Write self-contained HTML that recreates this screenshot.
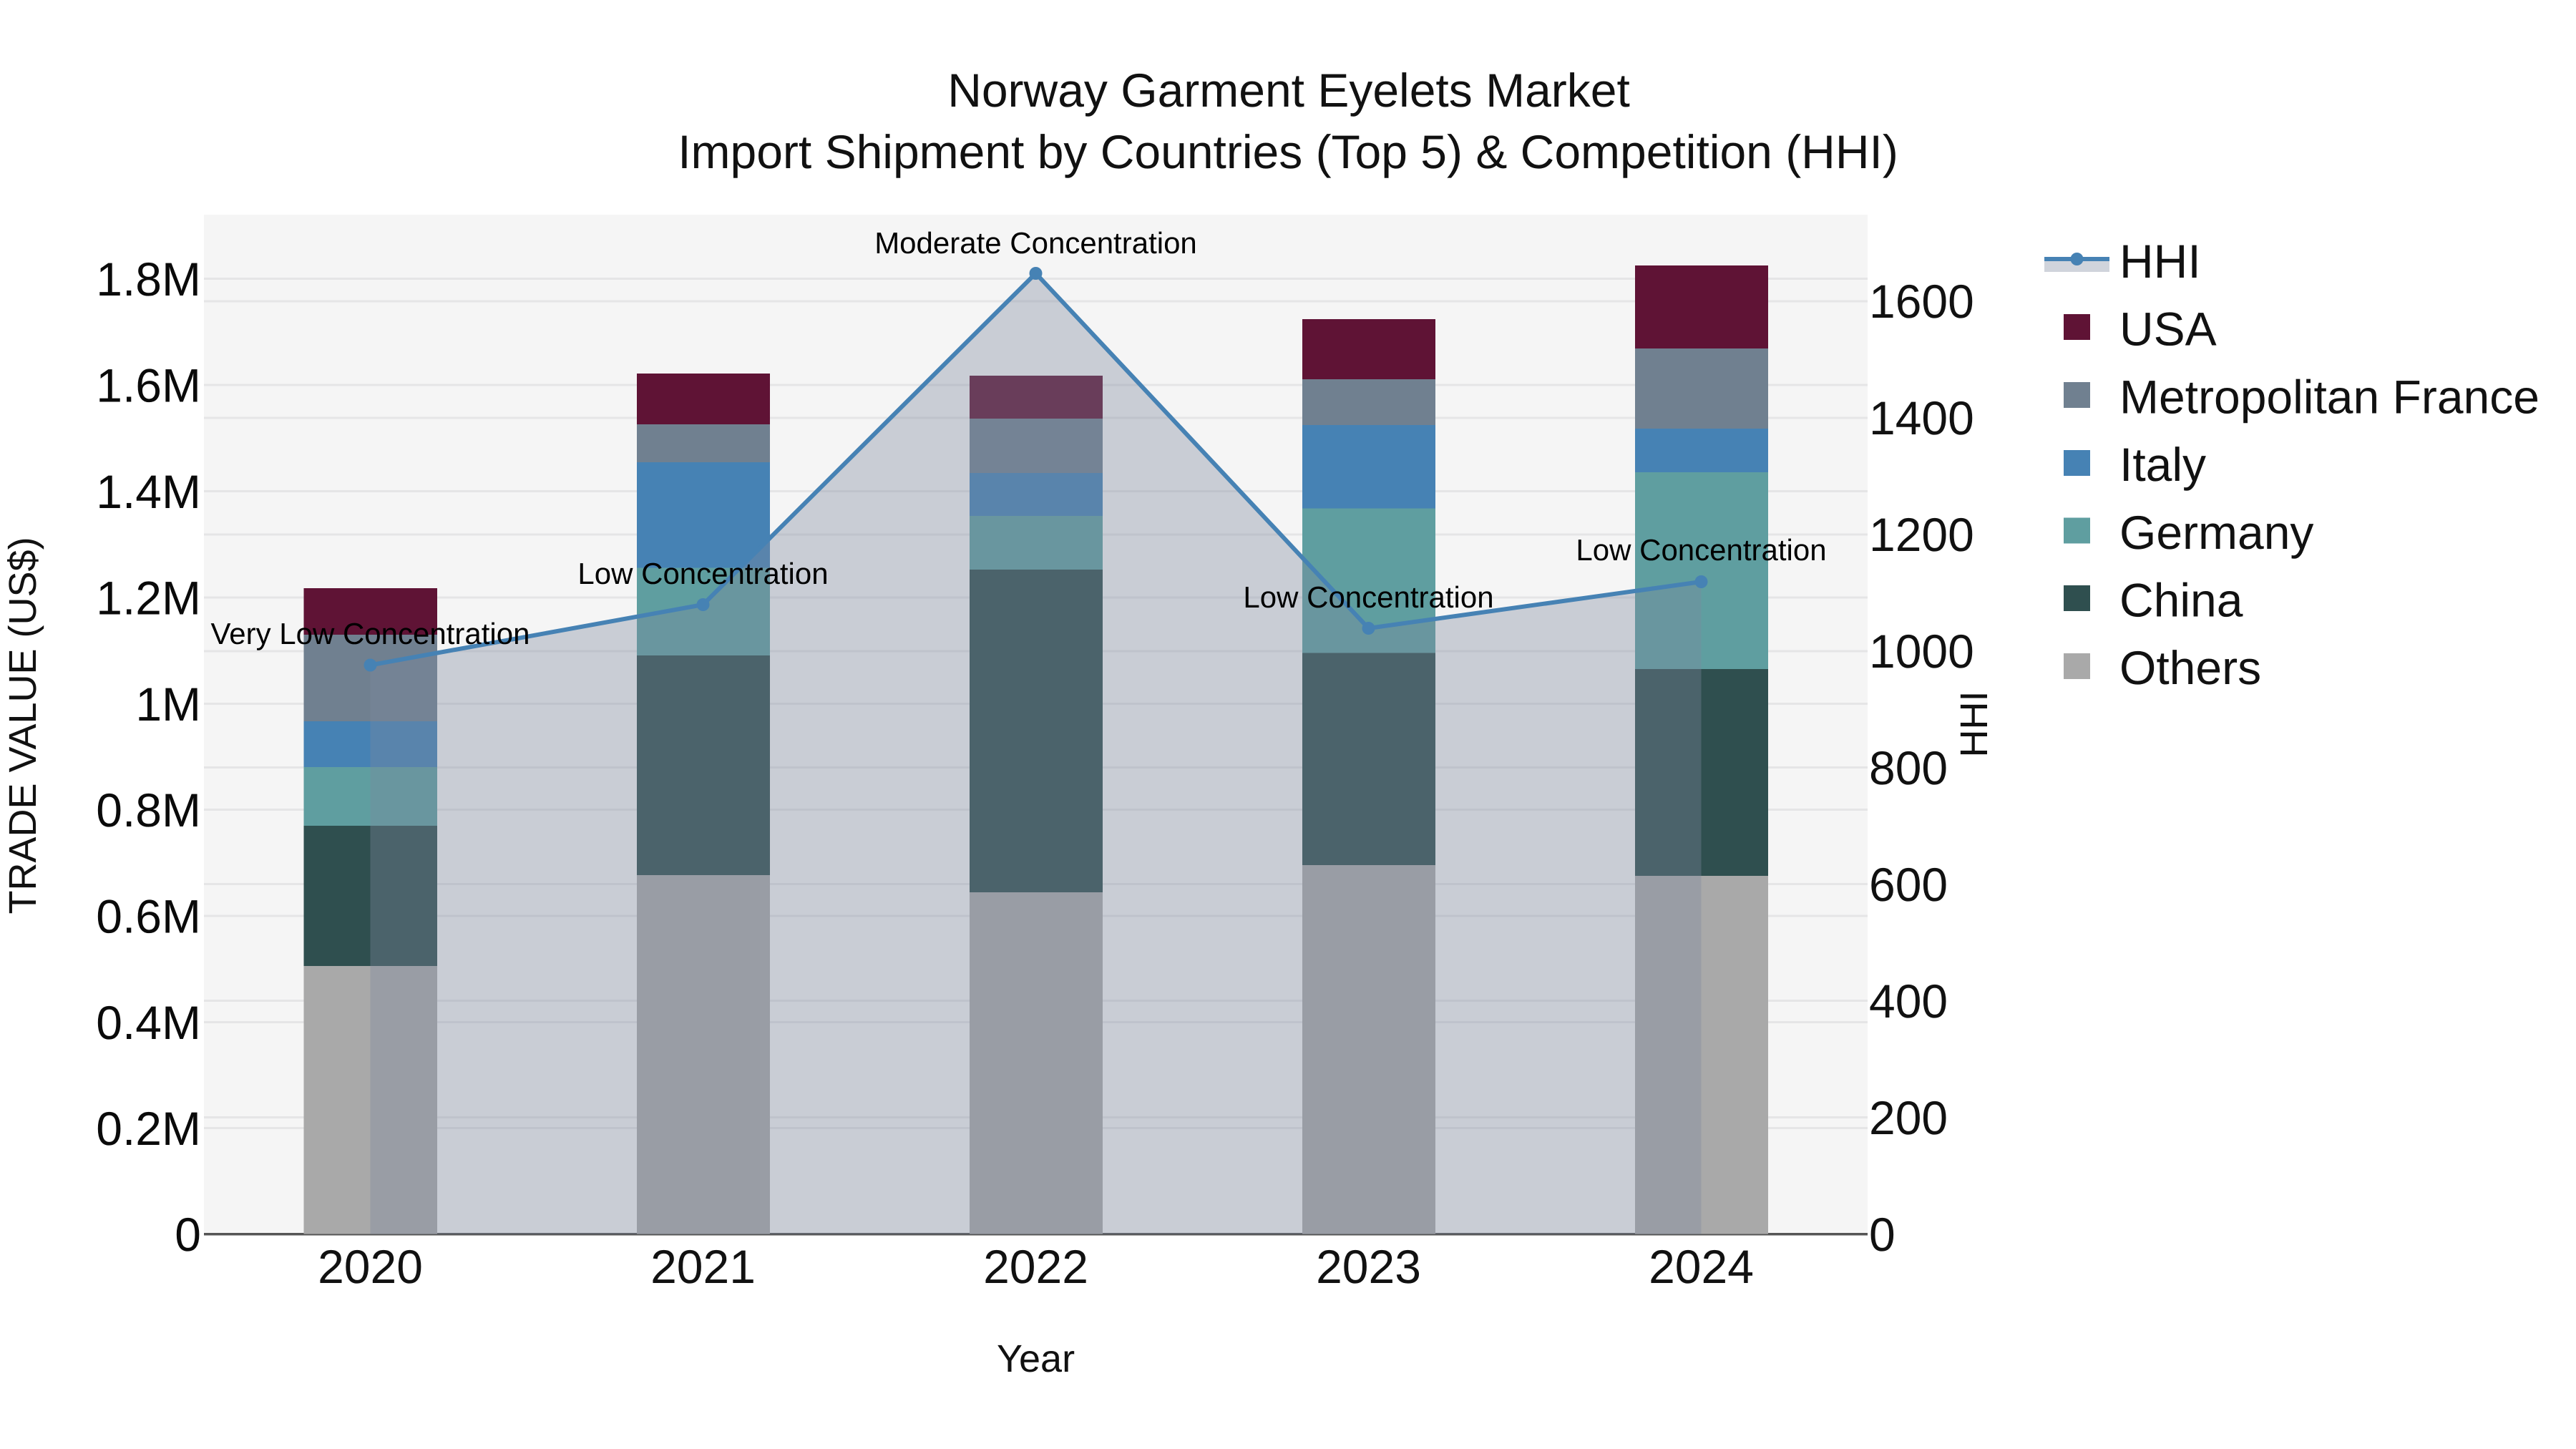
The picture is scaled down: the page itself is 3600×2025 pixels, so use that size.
<!DOCTYPE html>
<html>
<head>
<meta charset="utf-8">
<title>Norway Garment Eyelets Market</title>
<style>
html,body{margin:0;padding:0;background:#fff;width:3600px;height:2025px;overflow:hidden}
svg{display:block}
text{font-family:"Liberation Sans",Arial,sans-serif;text-rendering:geometricPrecision}
</style>
</head>
<body>
<svg xmlns="http://www.w3.org/2000/svg" width="3600" height="2025" viewBox="0 0 3600 2025">
<rect x="0" y="0" width="3600" height="2025" fill="#ffffff"/>
<rect x="285" y="300" width="2325" height="1425" fill="#f5f5f5"/>
<!-- gridlines -->
<g stroke="#e5e5e6" stroke-width="3" fill="none">
<path d="M285 389.5H2610M285 538H2610M285 686.5H2610M285 835H2610M285 983.5H2610M285 1131.5H2610M285 1280H2610M285 1428.5H2610M285 1576.5H2610"/>
<path d="M285 421H2610M285 584H2610M285 747H2610M285 910H2610M285 1072.5H2610M285 1235.5H2610M285 1398.5H2610M285 1561.5H2610"/>
</g>
<rect x="285" y="1723" width="2325" height="3.5" fill="#555555"/>
<!-- bars -->
<g shape-rendering="crispEdges">
<!-- 2020 -->
<rect x="424.5" y="822" width="186.5" height="65" fill="#5f1335"/>
<rect x="424.5" y="887" width="186.5" height="121" fill="#708090"/>
<rect x="424.5" y="1008" width="186.5" height="64" fill="#4682b4"/>
<rect x="424.5" y="1072" width="186.5" height="82" fill="#5f9ea0"/>
<rect x="424.5" y="1154" width="186.5" height="196" fill="#2f4f4f"/>
<rect x="424.5" y="1350" width="186.5" height="374.7" fill="#a9a9a9"/>
<!-- 2021 -->
<rect x="890" y="522" width="186" height="71" fill="#5f1335"/>
<rect x="890" y="593" width="186" height="53" fill="#708090"/>
<rect x="890" y="646" width="186" height="147.5" fill="#4682b4"/>
<rect x="890" y="793.5" width="186" height="122.5" fill="#5f9ea0"/>
<rect x="890" y="916" width="186" height="307" fill="#2f4f4f"/>
<rect x="890" y="1223" width="186" height="501.7" fill="#a9a9a9"/>
<!-- 2022 -->
<rect x="1355" y="525" width="186" height="60" fill="#5f1335"/>
<rect x="1355" y="585" width="186" height="76" fill="#708090"/>
<rect x="1355" y="661" width="186" height="60" fill="#4682b4"/>
<rect x="1355" y="721" width="186" height="75" fill="#5f9ea0"/>
<rect x="1355" y="796" width="186" height="451" fill="#2f4f4f"/>
<rect x="1355" y="1247" width="186" height="477.7" fill="#a9a9a9"/>
<!-- 2023 -->
<rect x="1820" y="446" width="186" height="84" fill="#5f1335"/>
<rect x="1820" y="530" width="186" height="64" fill="#708090"/>
<rect x="1820" y="594" width="186" height="116.5" fill="#4682b4"/>
<rect x="1820" y="710.5" width="186" height="202" fill="#5f9ea0"/>
<rect x="1820" y="912.5" width="186" height="296.5" fill="#2f4f4f"/>
<rect x="1820" y="1209" width="186" height="515.7" fill="#a9a9a9"/>
<!-- 2024 -->
<rect x="2285" y="371" width="186" height="116" fill="#5f1335"/>
<rect x="2285" y="487" width="186" height="112" fill="#708090"/>
<rect x="2285" y="599" width="186" height="61" fill="#4682b4"/>
<rect x="2285" y="660" width="186" height="275" fill="#5f9ea0"/>
<rect x="2285" y="935" width="186" height="289" fill="#2f4f4f"/>
<rect x="2285" y="1224" width="186" height="500.7" fill="#a9a9a9"/>
</g>
<!-- HHI area -->
<polygon points="517.5,929.5 982.5,845 1447.5,382 1912.5,878 2377.5,813 2377.5,1724.7 517.5,1724.7" fill="rgb(124,137,159)" fill-opacity="0.36"/>
<polyline points="517.5,929.5 982.5,845 1447.5,382 1912.5,878 2377.5,813" fill="none" stroke="#4682b4" stroke-width="6" stroke-linejoin="round"/>
<g fill="#4682b4">
<circle cx="517.5" cy="929.5" r="9"/>
<circle cx="982.5" cy="845" r="9"/>
<circle cx="1447.5" cy="382" r="9"/>
<circle cx="1912.5" cy="878" r="9"/>
<circle cx="2377.5" cy="813" r="9"/>
</g>
<!-- annotations -->
<g font-size="42" fill="#000" text-anchor="middle">
<text x="517.5" y="900">Very Low Concentration</text>
<text x="982.5" y="816">Low Concentration</text>
<text x="1447.5" y="354">Moderate Concentration</text>
<text x="1912.5" y="849">Low Concentration</text>
<text x="2377.5" y="783">Low Concentration</text>
</g>
<!-- title -->
<g font-size="66" fill="#111" text-anchor="middle">
<text x="1801" y="149">Norway Garment Eyelets Market</text>
<text x="1800" y="235">Import Shipment by Countries (Top 5) &amp; Competition (HHI)</text>
</g>
<!-- left ticks -->
<g font-size="66" fill="#0a0a0a" text-anchor="end">
<text x="281" y="413">1.8M</text>
<text x="281" y="561.5">1.6M</text>
<text x="281" y="710">1.4M</text>
<text x="281" y="858.5">1.2M</text>
<text x="281" y="1007">1M</text>
<text x="281" y="1155">0.8M</text>
<text x="281" y="1303.5">0.6M</text>
<text x="281" y="1452">0.4M</text>
<text x="281" y="1600">0.2M</text>
<text x="281" y="1748">0</text>
</g>
<!-- right ticks -->
<g font-size="66" fill="#111" text-anchor="start">
<text x="2612" y="444">1600</text>
<text x="2612" y="607">1400</text>
<text x="2612" y="770">1200</text>
<text x="2612" y="933">1000</text>
<text x="2612" y="1096">800</text>
<text x="2612" y="1259">600</text>
<text x="2612" y="1422">400</text>
<text x="2612" y="1585">200</text>
<text x="2612" y="1748">0</text>
</g>
<!-- x ticks -->
<g font-size="66" fill="#111" text-anchor="middle">
<text x="517.5" y="1793">2020</text>
<text x="982.5" y="1793">2021</text>
<text x="1447.5" y="1793">2022</text>
<text x="1912.5" y="1793">2023</text>
<text x="2377.5" y="1793">2024</text>
</g>
<!-- axis titles -->
<g font-size="54" fill="#111" text-anchor="middle">
<text x="1447.5" y="1917">Year</text>
<text transform="translate(50 1014) rotate(-90)">TRADE VALUE (US$)</text>
<text transform="translate(2777 1012) rotate(-90)">HHI</text>
</g>
<!-- legend -->
<rect x="2857" y="362" width="91" height="18" fill="rgb(124,137,159)" fill-opacity="0.36"/>
<rect x="2857" y="359" width="91" height="6" fill="#4682b4"/>
<circle cx="2902.5" cy="362" r="9" fill="#4682b4"/>
<g shape-rendering="crispEdges">
<rect x="2884" y="439" width="37" height="36" fill="#5f1335"/>
<rect x="2884" y="534" width="37" height="36" fill="#708090"/>
<rect x="2884" y="629" width="37" height="36" fill="#4682b4"/>
<rect x="2884" y="723.5" width="37" height="36" fill="#5f9ea0"/>
<rect x="2884" y="818" width="37" height="36" fill="#2f4f4f"/>
<rect x="2884" y="913" width="37" height="36" fill="#a9a9a9"/>
</g>
<g font-size="66" fill="#111">
<text x="2962" y="388">HHI</text>
<text x="2962" y="482.7">USA</text>
<text x="2962" y="577.4">Metropolitan France</text>
<text x="2962" y="672.1">Italy</text>
<text x="2962" y="766.8">Germany</text>
<text x="2962" y="861.5">China</text>
<text x="2962" y="956.2">Others</text>
</g>
</svg>
</body>
</html>
